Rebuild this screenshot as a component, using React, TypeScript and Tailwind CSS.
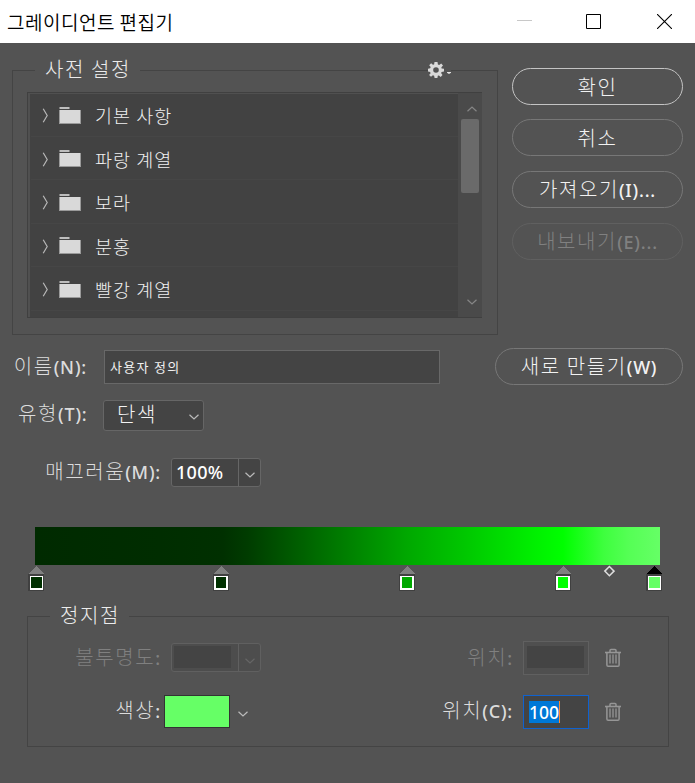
import React from "react";

const HANGUL = "font-['Noto_Sans_CJK_KR',sans-serif]";
const LATIN = "font-['Noto_Sans',sans-serif] font-medium tracking-[0.8px] text-[18px]";

const sizes = {
  base: "text-[20px] tracking-[1.6px] font-light",
  list: "text-[18.5px] tracking-[1px] font-light",
  title: "text-[19px] tracking-[0.5px] font-[350]",
  small: "text-[13px] tracking-[1.3px] font-normal",
};

/** Dialog text: thin Hangul with a slightly heavier Latin face for mnemonics. */
function Label({ text, size = "base", className = "" }: { text: string; size?: keyof typeof sizes; className?: string }) {
  const parts = text.split(/([()A-Za-z:.]+)/).filter(Boolean);
  return (
    <span className={`${HANGUL} ${sizes[size]} block whitespace-pre leading-[24px] ${className}`}>
      {parts.map((p, i) =>
        /[():.]/.test(p) ? (
          <span key={i} className={LATIN}>{p}</span>
        ) : (
          <span key={i}>{p}</span>
        )
      )}
    </span>
  );
}

function Chevron({ className = "", d = "M.5 .7 5 5l4.5-4.3" }: { className?: string; d?: string }) {
  return (
    <svg width="10" height="6" viewBox="0 0 10 6" fill="none" stroke="currentColor" strokeWidth="1.2" className={`shrink-0 ${className}`}>
      <path d={d} />
    </svg>
  );
}

function PillButton({ text, className = "" }: { text: string; className?: string }) {
  return (
    <button className={`flex h-[37px] w-[171px] items-center justify-center rounded-full border-[1.5px] ${className}`}>
      <Label text={text} />
    </button>
  );
}

function PresetRow({ name }: { name: string }) {
  return (
    <div className="flex h-[43.5px] shrink-0 items-center border-b border-[#464646] pl-[11px] pt-[2px]">
      <svg width="7" height="15" viewBox="0 0 7 15" fill="none" stroke="#b8b8b8" strokeWidth="1.2" className="mt-px">
        <path d="M1.2 .8 5.2 7.5l-4 6.7" />
      </svg>
      <svg width="22" height="17" viewBox="0 0 22 17" className="ml-[10px]">
        <path d="M.5 0h10v2H.5z" fill="#bdbdbd" />
        <path d="M0 3h22v14H0z" fill="#9a9a9a" />
        <path d="M1 3h20v13H1z" fill="#d9d9d9" />
      </svg>
      <Label text={name} size="list" className="ml-[14px] text-[#f0f0f0]" />
    </div>
  );
}

function Trash() {
  return (
    <svg width="16" height="20" viewBox="0 0 16 20" fill="none" stroke="#969696" className="shrink-0">
      <path d="M0 4.5h16" strokeWidth="1.6" />
      <path d="M5 4V2.4Q5 1.4 6 1.4h4Q11 1.4 11 2.4V4M1.9 4.5v12.4q0 1.3 1.2 1.3h9.8q1.2 0 1.2-1.3V4.5" strokeWidth="1.5" />
      <path d="M5 6.5v9M8 6.5v9M11 6.5v9" strokeWidth="1.3" />
    </svg>
  );
}

const stops = [
  { x: 28, color: "#003000", edge: true, active: false },
  { x: 213, color: "#003000", edge: false, active: false },
  { x: 399, color: "#00a800", edge: false, active: false },
  { x: 555, color: "#00ff00", edge: false, active: false },
  { x: 646, color: "#66ff66", edge: true, active: true },
];

function Stop({ x, color, edge, active }: (typeof stops)[number]) {
  const inner = edge ? { bx: 2, bw: 13, cx: 3, cw: 11 } : { bx: 1, bw: 14, cx: 3, cw: 10 };
  return (
    <svg width="16" height="26" viewBox="0 0 16 26" className="absolute top-0" style={{ left: x }} shapeRendering="crispEdges">
      <path d="M8.2 1 16 9H.7z" fill={active ? "#000" : "#808080"} />
      <path d="M0 9h16v17H0z" fill="#404040" />
      <rect x={inner.bx} y="11" width={inner.bw} height="14" fill="#fff" />
      <rect x={inner.cx} y="12" width={inner.cw} height="11" fill={color} />
    </svg>
  );
}

function Header() {
  return (
    <header className="flex h-[43px] items-center justify-between bg-white pl-[7px] pr-[23px] text-black">
      <Label text="그레이디언트 편집기" size="title" />
      <div className="flex items-center">
        <svg width="15" height="15" viewBox="0 0 15 15" stroke="#c8c8c8"><path d="M0 6.5h15" /></svg>
        <svg width="15" height="15" viewBox="0 0 15 15" fill="none" stroke="#000" className="ml-[54px] -mt-px"><path d="M.5 .5h14v14H.5z" /></svg>
        <svg width="15" height="15" viewBox="0 0 15 15" stroke="#000" strokeWidth="1.1" className="ml-[56px] -mt-px"><path d="m0 0 15 15M15 0 0 15" /></svg>
      </div>
    </header>
  );
}

function Presets() {
  return (
    <section className="mt-[27px] h-[265px] w-[486px] shrink-0 border border-[#444] px-[14px]">
      <div className="-mt-[16px] flex h-[28px] items-center justify-between pl-[8px] pr-[32px]">
        <div className="w-[105px] bg-[#535353] pl-[10px]">
          <Label text="사전 설정" className="text-[#ececec]" />
        </div>
        <div className="flex items-center gap-[3px] bg-[#535353] pt-px">
          <svg width="16" height="16" viewBox="-8 -8 16 16" fill="#d9d9d9">
            <path fillRule="evenodd" d="M-1.5-8h3l.4 2.5 1.3.5L5.2-6.5 7-4.5 5.4-2.7l.2 1.2L8-1.3v2.8l-2.4.4-.5 1.2L6.5 5 4.7 6.9 2.9 5.4l-1.1.4L1.4 8h-2.8l-.5-2.2-1.2-.5L-5 6.8-6.9 5l1.5-1.8-.5-1.2L-8 1.5v-2.8l2.2-.4.5-1.2L-6.8-4.8-4.9-6.7-3.1-5.2l1.2-.4zM0-2.8A2.8 2.8 0 1 0 0 2.8 2.8 2.8 0 1 0 0-2.8z" />
          </svg>
          <svg width="4" height="2" viewBox="0 0 4 2" fill="#e5e5e5" className="mt-[7px]"><path d="M0 0h4v.8L2 2 0 .8z" /></svg>
        </div>
      </div>
      <div className="mt-[9px] flex h-[226px] w-[455px] border-b border-l border-t border-[#404040]">
        <div className="flex w-[430px] flex-col overflow-hidden border-l-2 border-t border-[#505050] bg-[#424242]">
          <div className="-mt-px flex flex-col pl-px">
            {["기본 사항", "파랑 계열", "보라", "분홍", "빨강 계열"].map((n) => (
              <PresetRow key={n} name={n} />
            ))}
          </div>
        </div>
        <div className="flex w-[24px] flex-col items-center bg-[#4a4a4a] text-[#868686]">
          <Chevron className="ml-[3px] mt-[13px]" d="M.5 5.3 5 1l4.5 4.3" />
          <div className="mt-[7px] h-[74px] w-[18px] rounded-[2px] bg-[#6a6a6a]" />
          <Chevron className="ml-[3px] mt-[106px]" />
        </div>
      </div>
    </section>
  );
}

function StopDetails() {
  return (
    <section className="ml-[27px] mt-[25px] h-[131px] w-[642px] border border-[#444]">
      <div className="-mt-[14px] ml-[22px] w-[79px] bg-[#535353] pl-[10px]">
        <Label text="정지점" className="text-[#ececec]" />
      </div>
      <div className="mt-[14px] flex h-[34px] items-center">
        <div className="flex w-[133px] justify-end pb-[2px]"><Label text="불투명도:" className="text-[#808080]" /></div>
        <div className="ml-[10px] mt-[-1px] flex h-[29px] w-[90px] rounded-[3px] border border-[#606060] bg-[#4d4d4d] text-[#666]">
          <div className="w-[67px] border-r border-[#606060] p-[2px] pr-[7px]"><div className="h-[22px] bg-[#444]" /></div>
          <Chevron className="ml-[6px] mt-[14px]" />
        </div>
        <div className="flex w-[252px] justify-end pb-[2px]"><Label text="위치:" className="text-[#808080]" /></div>
        <div className="ml-[10px] h-[34px] w-[66px] border border-[#606060] bg-[#4f4f4f] py-[4px] pl-[3px]"><div className="h-[22px] w-[57px] bg-[#444]" /></div>
        <div className="ml-[16px]"><Trash /></div>
      </div>
      <div className="mt-[20px] flex h-[34px] items-center text-[#dcdcdc]">
        <div className="flex w-[133px] justify-end pb-[3px]"><Label text="색상:" /></div>
        <div className="ml-[3px] mt-[-1px] h-[33px] w-[66px] border border-[#333] bg-[#66ff66]" />
        <Chevron className="ml-[8px] mt-[3px] text-[#bbb]" />
        <div className="flex w-[265px] justify-end pb-[3px]"><Label text="위치(C):" /></div>
        <div className="ml-[10px] flex h-[34px] w-[66px] items-center border border-[#0f62d0] bg-[#444] pb-px pl-[5px]">
          <span className="h-[22px] w-[31px] border-r border-[#ff8a30] bg-[#0078d7] font-['Noto_Sans'] text-[17.5px] font-medium leading-[22px] text-white">100</span>
        </div>
        <div className="ml-[16px]"><Trash /></div>
      </div>
    </section>
  );
}

export default function App() {
  return (
    <div className="h-[783px] w-[695px] overflow-hidden bg-[#535353]">
      <Header />
      <div className="flex pl-[12px]">
        <Presets />
        <div className="ml-[14px] flex flex-col pt-[25px] text-[#f2f2f2]">
          <PillButton text="확인" className="border-[#c4c4c4]" />
          <PillButton text="취소" className="mt-[14px] border-[#777]" />
          <PillButton text="가져오기(I)..." className="mt-[15px] border-[#777]" />
          <PillButton text="내보내기(E)..." className="mt-[15px] border-[#606060] text-[#808080]" />
        </div>
      </div>
      <div className="mt-[13px] flex h-[37px] items-center text-[#dcdcdc]">
        <div className="flex w-[87px] justify-end"><Label text="이름(N):" /></div>
        <div className="ml-[17px] flex h-[34px] w-[336px] items-center border border-[#686868] bg-[#444] pl-[5px]">
          <Label text="사용자 정의" size="small" className="text-[#f0f0f0]" />
        </div>
        <button className="ml-[55px] flex h-[37px] w-[188px] items-center justify-center rounded-full border-[1.5px] border-[#777] text-[#f2f2f2]">
          <Label text="새로 만들기(W)" />
        </button>
      </div>
      <div className="mt-[15px] flex h-[31px] items-center text-[#dcdcdc]">
        <div className="flex w-[87.5px] justify-end pb-[4px]"><Label text="유형(T):" /></div>
        <div className="ml-[15.5px] flex h-[31px] w-[101px] items-center justify-between rounded-[3px] border border-[#666] bg-[#444] pl-[13px] pr-[4px]">
          <Label text="단색" className="pb-[4px] text-[#f2f2f2]" />
          <Chevron className="mt-[3px] text-[#bbb]" />
        </div>
      </div>
      <div className="mt-[27px] flex h-[29px] items-center text-[#dcdcdc]">
        <div className="flex w-[161px] justify-end pb-[3px]"><Label text="매끄러움(M):" /></div>
        <div className="ml-[10px] flex h-[29px] w-[90px] rounded-[3px] border border-[#666] bg-[#444]">
          <span className="w-[67px] border-r border-[#666] pl-[4px] font-['Noto_Sans'] text-[18px] font-medium leading-[27px] tracking-[0.3px] text-white">100%</span>
          <Chevron className="ml-[6px] mt-[13px] text-[#bbb]" />
        </div>
      </div>
      <div className="ml-[35px] mt-[40px] h-[38px] w-[625px] bg-[linear-gradient(to_right,#002a00_0%,#002d00_20%,#003000_30%,#003c00_34%,#008000_50%,#00a800_59.5%,#00c800_69%,#00f000_80%,#00ff00_84.5%,#18ff18_87%,#3eff3e_91%,#55ff55_95%,#66ff66_100%)]" />
      <div className="relative h-[26px]">
        {stops.map((s) => <Stop key={s.x} {...s} />)}
        <svg width="12" height="12" viewBox="0 0 12 12" fill="none" stroke="#dedede" strokeWidth="1.5" className="absolute left-[603px] top-0">
          <path d="m6.4 1.5 4.6 4.6-4.6 4.6-4.6-4.6z" />
        </svg>
      </div>
      <StopDetails />
    </div>
  );
}
